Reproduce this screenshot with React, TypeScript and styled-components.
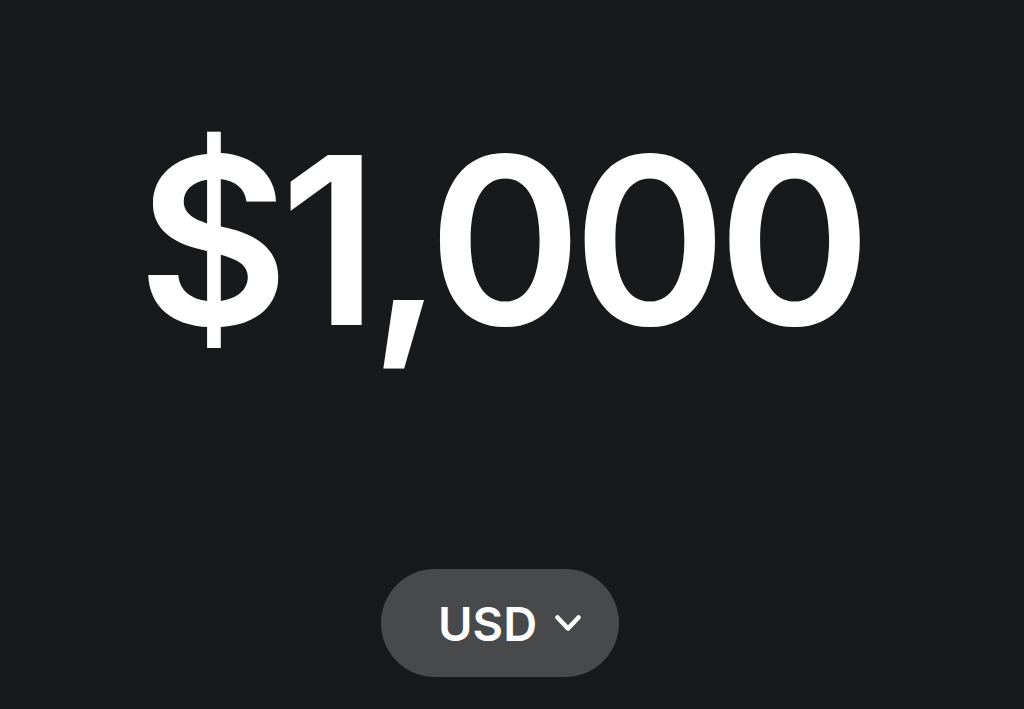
import styled, { createGlobalStyle } from 'styled-components'

const GlobalStyle = createGlobalStyle`
  html, body {
    margin: 0;
    padding: 0;
    background: #18191b;
  }
  body {
    font-family: Inter, "Open Sans", "Liberation Sans", sans-serif;
    color: #ffffff;
  }
`

const Screen = styled.main`
  height: 709px;
  box-sizing: border-box;
  padding-right: 24px;
  display: flex;
  flex-direction: column;
  align-items: center;
  background: #18191b;
`

const Amount = styled.h1`
  margin: 124px 0 0;
  font-size: 233px;
  font-weight: 600;
  line-height: 233px;
  letter-spacing: -9px;
  color: #ffffff;
`

const CurrencyButton = styled.button`
  margin-top: auto;
  margin-bottom: 32px;
  width: 238px;
  height: 108px;
  box-sizing: border-box;
  border: none;
  border-radius: 54px;
  background: #48494b;
  color: #ffffff;
  display: flex;
  align-items: center;
  justify-content: flex-start;
  gap: 18px;
  padding: 0 0 0 57px;
  font-family: inherit;
  font-size: 47px;
  font-weight: 600;
`

const Chevron = () => (
  <svg width="26" height="17" viewBox="0 0 26 17" fill="none" stroke="currentColor" strokeWidth="4.5" strokeLinecap="round" strokeLinejoin="round">
    <path d="M2.5 2.5L13 13.5L23.5 2.5" />
  </svg>
)

export default function App() {
  return (
    <>
      <GlobalStyle />
      <Screen>
        <Amount>$1,000</Amount>
        <CurrencyButton>
          USD
          <Chevron />
        </CurrencyButton>
      </Screen>
    </>
  )
}
